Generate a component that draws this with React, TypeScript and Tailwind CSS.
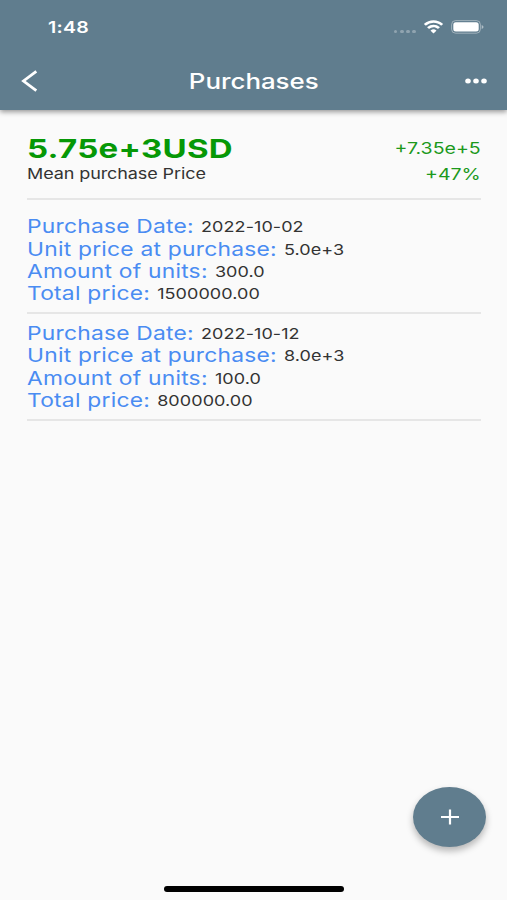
import { ReactNode } from "react";

const purchases = [
  { date: "2022-10-02", unitPrice: "5.0e+3", amount: "300.0", total: "1500000.00" },
  { date: "2022-10-12", unitPrice: "8.0e+3", amount: "100.0", total: "800000.00" },
];

function StatusBar() {
  return (
    <div className="flex h-[54px] items-center justify-between pl-12 pr-[23px]">
      <span className="origin-left scale-x-[1.22] text-base font-semibold leading-none tracking-[0.2px]">1:48</span>
      <div className="flex items-center">
        <div className="mr-[7px] mt-[9px] flex gap-[2.5px] opacity-30">
          <i className="h-[3px] w-[3.7px] rounded-full bg-white" />
          <i className="h-[3px] w-[3.7px] rounded-full bg-white" />
          <i className="h-[3px] w-[3.7px] rounded-full bg-white" />
          <i className="h-[3px] w-[3.7px] rounded-full bg-white" />
        </div>
        <svg width="21" height="14" viewBox="0 0 17 12" preserveAspectRatio="none" fill="white">
          <path d="M8.5 2.4c2.3 0 4.4.9 6 2.4.1.1.3.1.4 0l1.2-1.2c.1-.1.1-.3 0-.4a11 11 0 0 0-15.2 0c-.1.1-.1.3 0 .4l1.2 1.2c.1.1.3.1.4 0a8.7 8.7 0 0 1 6-2.4Zm0 3.9c1.3 0 2.5.5 3.4 1.3.1.1.3.1.4 0l1.2-1.2c.1-.1.1-.3 0-.4a7.2 7.2 0 0 0-10 0c-.1.1-.1.3 0 .4l1.2 1.2c.1.1.3.1.4 0a5 5 0 0 1 3.4-1.3Zm2.3 2.6c.1.1.1.3 0 .4l-2.1 2.1c-.1.1-.3.1-.4 0L6.2 9.3c-.1-.1-.1-.3 0-.4a3.5 3.5 0 0 1 4.6 0Z" />
        </svg>
        <svg className="ml-[7px]" width="33" height="14" viewBox="0 0 33 14">
          <rect x="0.6" y="0.6" width="28.8" height="12.6" rx="4" fill="none" stroke="white" strokeOpacity="0.4" />
          <rect x="2.3" y="2.3" width="25.4" height="9.3" rx="2.5" fill="white" />
          <path d="M30.7 5v4c1.2-.5 1.8-1.2 1.8-2s-.6-1.5-1.8-2Z" fill="white" fillOpacity="0.5" />
        </svg>
      </div>
    </div>
  );
}

function Header() {
  return (
    <header className="h-[110px] bg-[#607d8e] text-white shadow-[0_2px_5px_rgba(0,0,0,0.4)]">
      <StatusBar />
      <div className="flex h-[54px] items-center justify-between pl-[21px] pr-5">
        <svg width="22" height="22" viewBox="0 0 22 22" fill="none" stroke="white" strokeWidth="2.8">
          <path d="M15.3 1.3 2.5 11l12.8 9.7" />
        </svg>
        <h1 className="scale-x-[1.23] text-[21px] font-medium leading-none">Purchases</h1>
        <svg width="22" height="6" viewBox="0 0 22 6" fill="white">
          <ellipse cx="3" cy="3" rx="2.8" ry="2.5" />
          <ellipse cx="11" cy="3" rx="2.8" ry="2.5" />
          <ellipse cx="19" cy="3" rx="2.8" ry="2.5" />
        </svg>
      </div>
    </header>
  );
}

function Row({ label, children }: { label: string; children: ReactNode }) {
  return (
    <div className="flex h-[22.3px] origin-left scale-x-[1.2] items-center gap-1.5 whitespace-nowrap leading-none">
      <dt className="text-[19px] tracking-[0.19px] text-[#4a8cf2]">{label}</dt>
      <dd className="text-[15px] tracking-[0.06px] text-[#333]">{children}</dd>
    </div>
  );
}

export default function App() {
  return (
    <div className="relative flex h-[900px] w-[507px] flex-col overflow-hidden bg-[#fafafa] font-['Inter',sans-serif]">
      <Header />
      <main className="pl-[27px] pr-[26px]">
        <section className="flex h-[90px] justify-between border-b-2 border-[#e6e6e6] pt-[26px] leading-none">
          <div>
            <p className="h-[26px] origin-left scale-x-[1.27] text-[26px] font-bold leading-[26px] tracking-[0.2px] text-[#069806]">
              5.75e+3USD
            </p>
            <p className="h-6 origin-left scale-x-[1.2] text-[15px] leading-6 tracking-[-0.08px] text-[#333]">
              Mean purchase Price
            </p>
          </div>
          <div className="origin-right scale-x-[1.22] text-right text-base leading-[25.5px] text-[#1c991c]">
            <p>+7.35e+5</p>
            <p>+47%</p>
          </div>
        </section>
        <div className="pt-[7.6px]">
          {purchases.map((p) => (
            <dl key={p.date} className="h-[106.7px] border-b-2 border-[#e6e6e6] pt-2">
              <Row label="Purchase Date:">{p.date}</Row>
              <Row label="Unit price at purchase:">{p.unitPrice}</Row>
              <Row label="Amount of units:">{p.amount}</Row>
              <Row label="Total price:">{p.total}</Row>
            </dl>
          ))}
        </div>
      </main>
      <button className="absolute left-[413px] top-[787px] flex h-[60px] w-[73px] items-center justify-center rounded-[50%] bg-[#607d8e] shadow-[0_4px_7px_rgba(0,0,0,0.28)]">
        <svg width="20" height="16" viewBox="0 0 20 16" stroke="white" strokeWidth="2.2">
          <path d="M1 8h18M10 .5v15" />
        </svg>
      </button>
      <div className="absolute left-[164px] top-[886px] h-[5.5px] w-[180px] rounded-full bg-black" />
    </div>
  );
}
